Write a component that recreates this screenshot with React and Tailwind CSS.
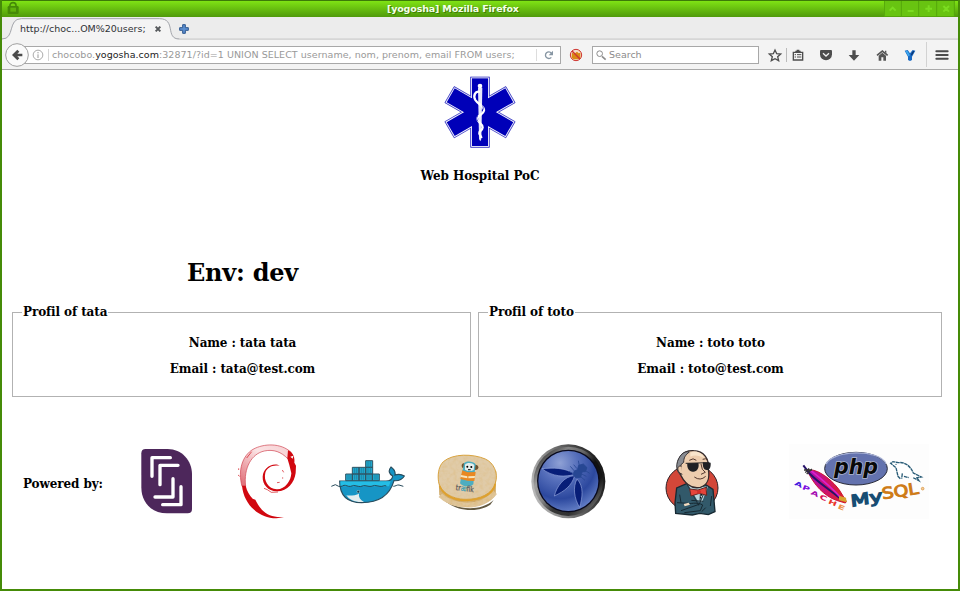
import React from "react";

const sans = "font-['DejaVu_Sans',sans-serif]";

function TitleBar() {
  return (
    <div className="flex h-[17px] items-center border-t border-[#3d7a08] bg-linear-to-b from-[#7fe314] to-[#509a0b] pl-[5px]">
      <svg className="h-4 w-[16px] shrink-0" viewBox="21 3 48 48">
        <path d="M30 19v-3a9 8 0 0 1 18 0v3" fill="none" stroke="#458a08" strokeWidth="5" />
        <rect x="23" y="18" width="33" height="24" rx="4" fill="#458a08" />
        <path d="M31 23h17v12H31z" fill="#5fb20d" />
      </svg>
      <div className="ml-[364px] w-[495px] text-[9.5px] leading-4 font-bold tracking-[-0.15px] text-[#f4ffe8] [text-shadow:1px_1px_0_#3e7d08]">
        [yogosha] Mozilla Firefox
      </div>
      <svg className="ml-[2px] h-4 w-[72px] shrink-0" viewBox="1152 3 216 48">
        <path d="M1152 3h210v46h-210z" fill="#68c411" />
        <path d="M1153 3v46M1204 3v46M1256 3v46M1310 3v46M1363 3v46" stroke="#55a60c" strokeWidth="3" />
        <path d="M1169 32l9-9 9 9M1223 33h18M1276 26h20M1286 16v20M1330 18l17 17M1347 18l-17 17" stroke="#7bdc20" strokeWidth="6" fill="none" />
      </svg>
    </div>
  );
}

function TabStrip() {
  return (
    <div className="grid h-[23px] bg-[#ececec]">
      <svg className="col-start-1 row-start-1 h-[23px] w-[956px]" viewBox="6 51 2868 69" preserveAspectRatio="none">
        <path d="M6 117.500H2874" stroke="#d6d6d6" strokeWidth="5" />
        <path d="M6 117C46 117 22 56 64 56H478C530 56 494 117 538 117V121H6Z" fill="#f4f4f4" />
        <path d="M6 117C46 117 22 56 64 56H478C530 56 494 117 538 117" fill="none" stroke="#a3a5ab" strokeWidth="3" />
      </svg>
      <div className="col-start-1 row-start-1 flex h-[23px] items-center pl-[18px]">
        <span className="w-[133.500px] text-[9.5px] leading-[22px] tracking-[-0.02px] whitespace-nowrap text-[#303236]">http://choc...OM%20users;</span>
        <svg className="h-2 w-2" viewBox="0 0 24 24">
          <path d="M5 5l14 14M19 5L5 19" stroke="#55585b" strokeWidth="6" />
        </svg>
        <svg className="ml-4 h-3 w-3" viewBox="0 0 36 36">
          <path d="M14 5h8v9h9v8h-9v9h-8v-9H5v-8h9z" fill="#5c8fd0" stroke="#2d578f" strokeWidth="3" />
        </svg>
      </div>
    </div>
  );
}

function NavBar() {
  return (
    <div className="flex h-[30px] items-center border-b border-[#a9a9a9] bg-[#f3f3f3] pl-[3px]">
      <svg className="z-10 h-6 w-6 shrink-0" viewBox="15 126 72 72">
        <circle cx="51" cy="162" r="34" fill="#fafafa" stroke="#a0a0a0" strokeWidth="3" />
        <path d="M36 162l16-16 6 6-6 6h15v8H52l6 6-6 6z" fill="#4b4b4b" />
      </svg>
      <div className="-ml-[10px] flex h-[18px] w-[542px] shrink-0 items-center border border-[#a8a8a8] bg-white pl-[13px]">
        <svg className="-ml-px h-3 w-3 shrink-0" viewBox="0 0 36 36">
          <circle cx="18" cy="18" r="14.500" fill="none" stroke="#999" strokeWidth="2.500" />
          <path d="M18 9v4M18 16v11" stroke="#999" strokeWidth="3" />
        </svg>
        <div className="ml-[4px] h-3 w-px shrink-0 bg-[#d5d5d5]" />
        <div className="ml-[3px] w-[484px] shrink-0 text-[9.5px] leading-4 tracking-[0.043px] whitespace-nowrap text-[#999]">
          chocobo.<span className="text-[#222]">yogosha.com</span>:32871/?id=1 UNION SELECT username, nom, prenom, email FROM users;
        </div>
        <div className="h-3 w-px shrink-0 bg-[#ddd]" />
        <svg className="ml-1.5 h-3 w-3 shrink-0" viewBox="126 144 36 36">
          <path d="M151 169a10 10 0 1 1 0-13" fill="none" stroke="#8796a3" strokeWidth="4" />
          <path d="M156 149v14h-13z" fill="#8796a3" />
        </svg>
      </div>
      <svg className="ml-[8px] h-[14px] w-[14px] shrink-0" viewBox="208 141 42 42">
        <circle cx="229" cy="162" r="17" fill="#f6dcc9" stroke="#cf3531" strokeWidth="3" />
        <path d="M217 155l7 3 8-6 5 5 5-2v17l-7 3h-13l-6-5z" fill="#d98a13" />
        <path d="M217 150l24 24" stroke="#cf3531" strokeWidth="4" />
      </svg>
      <div className="ml-[9px] flex h-[18px] w-[167px] shrink-0 items-center border border-[#a8a8a8] bg-white pl-0.5">
        <svg className="h-3 w-3" viewBox="284 144 36 36">
          <circle cx="298" cy="158" r="8.500" fill="none" stroke="#8c8c8c" strokeWidth="3" />
          <path d="M305 166l11 10" stroke="#8c8c8c" strokeWidth="5" />
        </svg>
        <span className="ml-[2px] text-[9.5px] leading-4 text-[#8b8b8b]">Search</span>
      </div>
      <svg className="ml-2 h-4 w-4 shrink-0" viewBox="801 138 48 48">
        <path d="M825 147l5 11 12 1-9 8 3 12-11-6-11 6 3-12-9-8 12-1z" fill="none" stroke="#4d4d4d" strokeWidth="4" />
      </svg>
      <div className="ml-[3px] h-[14px] w-px bg-[#bbb]" />
      <svg className="ml-[3px] h-4 w-4 shrink-0" viewBox="870 138 48 48">
        <path d="M880 154h28v23h-28z" fill="none" stroke="#4d4d4d" strokeWidth="4" />
        <path d="M886 149h16v7h-16zM890 146h8v5h-8z" fill="#4d4d4d" />
        <path d="M884 161h4M891 161h13M884 168h4M891 168h13" stroke="#4d4d4d" strokeWidth="3" />
      </svg>
      <svg className="ml-3 h-4 w-4 shrink-0" viewBox="954 138 48 48">
        <path d="M963 147h30q3 0 3 4v9a18 18 0 0 1-36 0v-9q0-4 3-4z" fill="#4d4d4d" />
        <path d="M969 157l9 8 9-8" fill="none" stroke="#f3f3f3" strokeWidth="4" />
      </svg>
      <svg className="ml-3 h-4 w-4 shrink-0" viewBox="1038 138 48 48">
        <path d="M1057 148h10v14h11l-16 17-16-17h11z" fill="#4d4d4d" />
      </svg>
      <svg className="ml-3 h-4 w-4 shrink-0" viewBox="1122 138 48 48">
        <path d="M1131 163l16-13 16 13" fill="none" stroke="#555" strokeWidth="5" />
        <path d="M1136 164l11-9 11 9v15h-8v-10h-6v10h-8zM1155 149h4v9l-4-4z" fill="#555" />
      </svg>
      <svg className="ml-3 h-4 w-4 shrink-0" viewBox="1207 138 48 48">
        <path d="M1215 149l9-2 7 10 8-10 8 2-10 18v10l-6 3-6-3v-10z" fill="#1769c4" />
        <path d="M1217 150l6-1 8 14-5 3z" fill="#3da7ee" />
        <path d="M1234 160l6-10 4 1-8 13z" fill="#0c3670" />
      </svg>
      <div className="ml-2 h-[25px] w-px bg-[#d2d2d2]" />
      <svg className="ml-[7px] h-4 w-4 shrink-0" viewBox="1303 138 48 48">
        <path d="M1310 151h34M1310 162h34M1310 173h34" stroke="#4b4b4b" strokeWidth="6" strokeLinecap="round" />
      </svg>
    </div>
  );
}

function StarOfLife() {
  return (
    <svg className="h-[72px] w-[72px]" viewBox="222 229 216 216">
      {["#3a3ac4", "#fff", "#0000b8"].map((c, i) => (
        <g key={c} fill={c} stroke={c} strokeWidth={[2, 0, 0][i]}>
          {[0, 60, 120].map((a) => (
            <rect key={a} x={[302, 303.500, 306][i]} y={[232, 233.500, 236][i]} width={[56, 53, 48][i]} height={[211, 208, 203][i]} transform={`rotate(${a} 330 337.500)`} />
          ))}
        </g>
      ))}
      <path d="M324 264h13l-3 154-3 7-4-7z" fill="#e9e9fa" />
      <circle cx="330" cy="259" r="7" fill="#fff" />
      <path d="M330 277c-15-5-21 12-14 24 8 13 28 18 26 32-2 13-21 13-20 25 1 11 17 14 16 25-1 10-11 10-10 18 1 6 6 7 6 14" fill="none" stroke="#fff" strokeWidth="7" />
      <path d="M337 317c4 6 4 12-1 17M323 349c-4 5-4 11 1 16" fill="none" stroke="#0000b8" strokeWidth="2" />
    </svg>
  );
}

function Profile({ name, className, bodyClass }) {
  return (
    <fieldset className={`h-[92px] border border-[#b2b2b2] px-[9px] text-center text-[12px] font-bold ${className}`}>
      <legend className="px-px text-left leading-[14px] tracking-[-0.1px]">Profil of {name}</legend>
      <div className={bodyClass}>
        <p className="mt-[17px] leading-[14px]">Name : {name} {name}</p>
        <p className="mt-3 leading-[14px]">Email : {name}@test.com</p>
      </div>
    </fieldset>
  );
}

function BracketLogo() {
  return (
    <svg className="h-[75px] w-[54px] shrink-0" viewBox="30 27 162 225">
      <path d="M47 42h66c42 0 73 34 73 76v104q0 13-13 13h-62c-46 0-77-32-77-78V55q0-13 13-13z" fill="#4d275b" />
      <g fill="none" stroke="#fff" strokeWidth="10" strokeLinecap="round" strokeLinejoin="round">
        <path d="M121 68H66v56M144 91H90v58M129 131v55H75M153 155v54H98" />
      </g>
    </svg>
  );
}

function DebianLogo() {
  return (
    <svg className="ml-[43px] h-[75px] w-[62px] shrink-0" viewBox="321 27 186 225">
      <defs>
        <linearGradient id="swirl" x1="1" y1="0" x2="0" y2="1">
          <stop offset="0" stopColor="#f6cdd0" />
          <stop offset=".4" stopColor="#fbe4e5" />
          <stop offset="1" stopColor="#df6872" />
        </linearGradient>
      </defs>
      <path d="M336 154C323 106 337 62 369 43c32-18 84-20 114 9l-10 19c-19-20-42-29-70-23-38 8-63 51-56 106z" fill="url(#swirl)" stroke="#cf3e4b" strokeWidth="2" />
      <path d="M336 152c5 54 48 97 103 98l23-3-20-1c-29-3-47-17-62-44l-4-8-8-3c-10-11-17-22-21-39z" fill="#d10810" />
      <path d="M474 46c17 7 21 25 19 37l5 9-1 22c-4 30-25 56-57 55-26-1-43-21-42-44 2-24 22-40 45-36l6 4c-19-5-38 4-43 20-6 24 9 48 34 50 25 1 43-25 44-48l-6-25-6-20z" fill="#d10810" />
      <path d="M402 160l10 4 12 8 20-1M326 100v5M324 120l5 4M457 105l4 7M458 127v4M441 143l8-1M350 69l15-19" fill="none" stroke="#d10810" strokeWidth="2" />
      <path d="M481 65l9-3-2 9z" fill="#fff" />
    </svg>
  );
}

function DockerLogo() {
  return (
    <svg className="ml-8 h-[75px] w-[74px] shrink-0" viewBox="33 27 222 225">
      <path d="M59 138h139q19 0 20-15c-11-7-14-16-5-27 11 8 14 14 12 24 11-4 20-2 28 3-7 12-17 15-31 14-12 42-45 66-97 66-45 0-66-24-66-65z" fill="#1695c5" stroke="#294c5d" strokeWidth="3.500" />
      <path d="M61 139h151l-5 15H62z" fill="#24bde5" />
      <path d="M79 181c10 2 29 0 38-5-2 9 3 18 15 25-26 2-43-5-53-20z" fill="#e2edef" />
      <g fill="#22a8ce" stroke="#315362" strokeWidth="3">
        <path d="M77 117h20v20H77zM97 117h20v20H97zM117 117h20v20h-20zM137 117h20v20h-20zM157 117h21v20h-21zM97 97h20v20H97zM117 97h20v20h-20zM137 97h21v20h-21zM137 77h21v20h-21z" />
      </g>
      <path d="M84 119v15M90 119v15M104 119v15M110 119v15M124 119v15M130 119v15M144 119v15M150 119v15M165 119v15M171 119v15M104 99v15M110 99v15M124 99v15M130 99v15M144 79v35M151 79v35" stroke="#197895" strokeWidth="2" />
      <path d="M34 154l12-5 10 5c9 3 15-5 20-3l10 3c9 2 13-5 19-2l10 2c9 3 14-4 20-2l12 2c9 2 15-5 21-2l12 2c8 2 13-5 19-1M220 154c6 0 11-5 17-4l13 4" fill="none" stroke="#284b5b" strokeWidth="3" />
      <circle cx="115" cy="170" r="5" fill="#9dd5e2" /><circle cx="115" cy="170" r="3.500" fill="#123d50" />
    </svg>
  );
}

function TraefikLogo() {
  return (
    <svg className="ml-8 h-[75px] w-[61px] shrink-0" viewBox="351 27 183 225">
      <defs>
        <filter id="crumb" x="0" y="0" width="1" height="1">
          <feTurbulence type="fractalNoise" baseFrequency=".09" numOctaves="2" seed="4" />
          <feColorMatrix values="0 0 0 0 .72  0 0 0 0 .5  0 0 0 0 .22  0 2 0 0 -.75" />
          <feComposite in2="SourceGraphic" operator="in" />
        </filter>
      </defs>
      <path d="M360 178c28 45 116 58 161 17l-10 14c-38 26-105 20-140-15z" fill="#635942" />
      <path d="M355 116l3 63c23 48 135 50 169 0l2-70z" fill="#cda765" />
      <path d="M361 181c34 34 120 47 164-9" fill="none" stroke="#dfc69c" strokeWidth="15" />
      <path d="M355 116l3 63c23 48 135 50 169 0l2-70z" filter="url(#crumb)" />
      <path id="cheese" d="M370 80c29-25 88-24 126-8 25 11 40 43 30 72-9 33-46 49-88 49-45 0-81-25-83-59-2-22 3-42 15-54z" fill="#e0cba8" stroke="#d9a23b" strokeWidth="3" />
      <path d="M370 80c29-25 88-24 126-8 25 11 40 43 30 72-9 33-46 49-88 49-45 0-81-25-83-59-2-22 3-42 15-54z" filter="url(#crumb)" opacity=".5" />
      <path d="M359 153c9 26 41 43 79 43 42 0 81-16 88-49" fill="none" stroke="#dfa12d" strokeWidth="5" />
      <ellipse cx="434" cy="92" rx="9" ry="8" fill="#71532f" /><ellipse cx="466" cy="97" rx="9" ry="8" fill="#71532f" />
      <path d="M432 85c6-8 28-7 35 3l-7 60c-9 9-28 10-40-3z" fill="#4eadc0" />
      <path d="M435 89c6-7 23-6 28 2l-2 14q-13 7-26-1z" fill="#e5eeec" />
      <circle cx="442" cy="95" r="3" /><circle cx="454" cy="96" r="3" /><path d="M444 102h8v4h-8z" fill="#333" />
      <path d="M427 106l16 6 24-1-4 27-20-1-22-5z" fill="#e98822" />
      <path d="M423 120l19 4v6l-20-4zM445 124l20-1-1 6-19 1z" fill="#f8e6be" />
      <text transform="rotate(7 407 164)" x="407" y="165" fill="#53545a" stroke="#53545a" strokeWidth=".7" fontSize="23" fontFamily="DejaVu Sans" textLength="54" lengthAdjust="spacingAndGlyphs">tr<tspan fill="#399eb6" stroke="#399eb6">æ</tspan>fik</text>
    </svg>
  );
}

function WaspLogo() {
  return (
    <svg className="ml-[33px] h-[75px] w-[75px] shrink-0" viewBox="33 27 225 225">
      <defs>
        <linearGradient id="ring" x1=".1" y1=".15" x2=".9" y2=".85">
          <stop offset="0" stopColor="#222" /><stop offset=".2" stopColor="#999" /><stop offset=".4" stopColor="#777" /><stop offset=".6" stopColor="#080808" /><stop offset=".8" stopColor="#111" /><stop offset="1" stopColor="#777" />
        </linearGradient>
        <radialGradient id="glass" cx=".36" cy=".2" r=".85">
          <stop offset="0" stopColor="#8fa1d5" /><stop offset=".35" stopColor="#566fbb" /><stop offset=".7" stopColor="#2c489e" /><stop offset="1" stopColor="#6782c9" />
        </radialGradient>
        <linearGradient id="edge" x1="0" y1=".6" x2="1" y2=".3"><stop stopColor="#bbb" /><stop offset=".4" stopColor="#777" /><stop offset="1" stopColor="#111" /></linearGradient>
      </defs>
      <circle cx="145" cy="139" r="111" fill="url(#edge)" />
      <circle cx="145" cy="139" r="104" fill="url(#ring)" opacity=".7" />
      <circle cx="145" cy="138" r="94" fill="#08091d" />
      <circle cx="145" cy="138" r="90" fill="url(#glass)" />
      <g fill="#071e78" stroke="#93a5dd" strokeWidth="2">
        <path d="M66 101c29-3 73-4 97 17-25 9-67 8-97-17z" />
        <path d="M164 122c-9 31-31 47-61 61 6-27 29-60 61-61z" />
        <path d="M171 132c22 23 16 55 8 85-17-26-21-61-8-85z" />
      </g>
      <g fill="#274793" stroke="#274793" strokeWidth="2.500">
        <path d="M163 108l14-6 9 10-4 15-15 1-8-9z" />
        <path d="M176 91l14-4 11 11-5 12-14 1-9-9z" />
        <path d="M178 92l-3-15M195 106l14 9M164 109l-13-15M159 115l-12-6M181 124l14 12M185 117l14 7M171 101l-10-12" fill="none" />
      </g>
    </svg>
  );
}

function JenkinsLogo() {
  return (
    <svg className="ml-[58px] h-[75px] w-[57px] shrink-0" viewBox="432 27 171 225">
      <ellipse cx="516" cy="159" rx="78" ry="70" fill="#d34739" stroke="#302126" strokeWidth="3" />
      <path d="M467 235l-2-31 5-45 35-15 53 6 21 13 6 67-20 9-26-4-22 5z" fill="#32596a" stroke="#172932" strokeWidth="4" />
      <path d="M505 150l38 7 21-3-18 48-13-4z" fill="#bad6dd" />
      <path d="M502 150l34 61 26-59M529 169l12 8-1 22M555 165l-12 16" fill="none" stroke="#233541" strokeWidth="3" />
      <path d="M478 111c-14-38 9-66 43-64 31 1 47 24 44 56 5 28-4 48-24 54-27 7-51-15-63-46z" fill="#edcdae" stroke="#332a2b" strokeWidth="4" />
      <path d="M486 57c8-7 15-8 22-6-12 9-17 17-17 31l-8 7-1 31c-20-17-12-47 4-63z" fill="#898c92" stroke="#363336" strokeWidth="3" />
      <path d="M511 53c17-8 35 0 42 16-16-9-31-10-42-4z" fill="#f9e5cc" />
      <path d="M484 94c-14-5-15 18 3 24" fill="#edcdae" stroke="#332a2b" strokeWidth="3" />
      <path d="M497 85l71-2" stroke="#252424" strokeWidth="3" />
      <path d="M502 85l33-1c4 14-4 26-15 26-12 1-20-10-18-25zM549 82l23 1c1 15-4 23-12 22-8 0-13-9-11-23z" fill="#202124" />
      <path d="M508 76q12-9 21 0M548 73q10-5 16 3M543 87l4 16 9 9-13 6M523 126q18 13 34-2" fill="none" stroke="#52382f" strokeWidth="3" />
      <path d="M509 162l25 3 24-8 2 24-21-6-26 8z" fill="#e6443b" stroke="#682824" strokeWidth="3" />
      <circle cx="537" cy="171" r="6" fill="#d22e2b" />
      <path d="M491 209c21-3 40-9 57 1l-7 17-48 6M550 199l-36-3M471 203l33 2M557 218l-12 12M483 227l54-19M479 179l4 24M575 183l-4 30" fill="none" stroke="#172932" strokeWidth="3" />
      <path d="M491 207l15-4 4 6-16 5z" fill="#f2dbc0" />
      <circle cx="542" cy="188" r="2" /><circle cx="545" cy="180" r="2" />
    </svg>
  );
}

function StackLogo() {
  const apache = [
    ["A", 42, 149, "#4617de"], ["P", 65, 161, "#7b0be0"], ["A", 91, 177, "#a409b0"],
    ["C", 117, 190, "#d50a52"], ["H", 143, 204, "#e8352a"], ["E", 172, 219, "#ef9148"],
  ];
  return (
    <svg className="ml-[68px] h-[75px] w-[140px] shrink-0" viewBox="27 27 420 225">
      <defs>
        <linearGradient id="feather"><stop stopColor="#a312c0" /><stop offset=".5" stopColor="#ce126c" /><stop offset="1" stopColor="#dc291b" /></linearGradient>
      </defs>
      <path d="M27 27h420v225H27z" fill="#fdfdfd" />
      <path d="M81 105l20 1c30 8 61 37 77 59l21 34-3 5-27-8c-35-13-67-44-88-91z" fill="url(#feather)" stroke="#ce142e" strokeWidth="3" />
      <path d="M70 91l20 26c31 31 63 49 96 78" stroke="#261269" strokeWidth="6" fill="none" />
      <path d="M93 107c30 24 65 53 91 83" stroke="#db20cd" strokeWidth="5" fill="none" />
      <path d="M76 113l11-13M72 105l24 0M80 117l16-15" stroke="#333" strokeWidth="4" />
      <path d="M177 182l21 6 2 14-23-6z" fill="#d7a52d" />
      {apache.map(([c, x, y, color], i) => (
        <text key={i} transform={`translate(${x} ${y}) rotate(24) scale(1.65 1)`} fontSize="19" fontWeight="bold" fontFamily="DejaVu Sans" fill={color}>{c}</text>
      ))}
      <ellipse cx="228" cy="101" rx="94" ry="49" fill="#6372ae" stroke="#292b39" strokeWidth="3" />
      <path d="M138 88c16-43 160-48 180-2" fill="none" stroke="#a8b2d8" strokeWidth="4" />
      <text x="162" y="116" textLength="132" lengthAdjust="spacingAndGlyphs" fontSize="65" fontWeight="bold" fontStyle="italic" fontFamily="DejaVu Sans" fill="#080808" stroke="#aeb5cb" strokeWidth="5" paintOrder="stroke">php</text>
      <text transform="translate(214 215) rotate(-10) skewX(-4)" textLength="96" lengthAdjust="spacingAndGlyphs" fontSize="47" fontFamily="DejaVu Sans" fill="#174d73" stroke="#174d73" strokeWidth="4">My</text>
      <text transform="translate(308 193) rotate(-9)" textLength="111" lengthAdjust="spacingAndGlyphs" fontSize="47" fontFamily="DejaVu Sans" fill="#ce7b16" stroke="#ce7b16" strokeWidth="3">SQL</text>
      <circle cx="428" cy="161" r="4" fill="#f3cfa0" stroke="#d68a2c" strokeWidth="2" />
      <path d="M361 131l-7-7-6-26-16-13 7-5 16 3c21-3 37 12 45 31l24 12-13 2-2 12-10-12c-12-5-24-3-32-13l-2 16z" fill="#fff" />
      <path d="M361 131l-7-7-6-26-16-13 7-5 16 3c21-3 37 12 45 31l24 12-13 2 6 9-18-9M367 115l-2 16M372 124l14 4" fill="none" stroke="#285b76" strokeWidth="4" strokeDasharray="11 1.500" />
      <circle cx="348" cy="88" r="2" fill="#285b76" />
    </svg>
  );
}

export default function App() {
  return (
    <div className={`h-[591px] w-[960px] overflow-hidden border-x-2 border-b-2 border-[#458b08] bg-white ${sans}`}>
      <TitleBar />
      <TabStrip />
      <NavBar />
      <main className="font-['DejaVu_Serif',serif] text-black">
        <header className="flex h-[190px] flex-col items-center pt-[6px]">
          <StarOfLife />
          <h4 className="mt-[21px] text-[12px] leading-[14px] font-bold tracking-[-0.06px]">Web Hospital PoC</h4>
        </header>
        <h1 className="ml-[185px] h-[45px] text-[24px] leading-[25px] font-bold tracking-[-0.25px]">Env: dev</h1>
        <section className="flex gap-[7px] pl-[10px]">
          <Profile name="tata" className="w-[459px]" bodyClass="pl-0.5 tracking-[-0.12px]" />
          <Profile name="toto" className="w-[464px]" bodyClass="pl-px tracking-[-0.09px]" />
        </section>
        <footer className="mt-[47px] flex h-[75px] items-center">
          <h4 className="w-[138px] shrink-0 pt-1 pl-[21px] text-[12px] leading-[14px] font-bold tracking-[-0.1px]">Powered by:</h4>
          <BracketLogo />
          <DebianLogo />
          <DockerLogo />
          <TraefikLogo />
          <WaspLogo />
          <JenkinsLogo />
          <StackLogo />
        </footer>
      </main>
    </div>
  );
}
